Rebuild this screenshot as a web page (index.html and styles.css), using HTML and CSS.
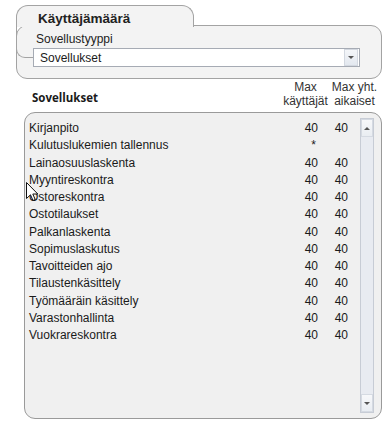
FILE: index.html
```html
<!DOCTYPE html>
<html lang="fi">

<head>
    <meta charset="UTF-8">
    <title>Käyttäjämäärä</title>
    <link rel="stylesheet" href="styles.css">
</head>

<body>
    <!-- yläosan ryhmä -->
    <div class="group">
        <div class="tab"></div>
        <div class="curve"></div>
        <div class="group-body">
            <div class="title">Käyttäjämäärä</div>
            <div class="label">Sovellustyyppi</div>
            <div class="select">
                <span>Sovellukset</span>
                <i class="drop"></i>
            </div>
        </div>
    </div>

    <!-- otsikot -->
    <div class="head">
        <div class="head-name">Sovellukset</div>
        <div class="head-col">Max<br>käyttäjät</div>
        <div class="head-col">Max yht.<br>aikaiset</div>
    </div>

    <!-- lista -->
    <div class="list">
        <div class="rows">
            <div class="row"><span>Kirjanpito</span><span class="num">40</span><span class="num">40</span></div>
            <div class="row"><span>Kulutuslukemien tallennus</span><span class="num star">*</span><span class="num"></span></div>
            <div class="row"><span>Lainaosuuslaskenta</span><span class="num">40</span><span class="num">40</span></div>
            <div class="row"><span>Myyntireskontra</span><span class="num">40</span><span class="num">40</span></div>
            <div class="row"><span>Ostoreskontra</span><span class="num">40</span><span class="num">40</span></div>
            <div class="row"><span>Ostotilaukset</span><span class="num">40</span><span class="num">40</span></div>
            <div class="row"><span>Palkanlaskenta</span><span class="num">40</span><span class="num">40</span></div>
            <div class="row"><span>Sopimuslaskutus</span><span class="num">40</span><span class="num">40</span></div>
            <div class="row"><span>Tavoitteiden ajo</span><span class="num">40</span><span class="num">40</span></div>
            <div class="row"><span>Tilaustenkäsittely</span><span class="num">40</span><span class="num">40</span></div>
            <div class="row"><span>Työmääräin käsittely</span><span class="num">40</span><span class="num">40</span></div>
            <div class="row"><span>Varastonhallinta</span><span class="num">40</span><span class="num">40</span></div>
            <div class="row"><span>Vuokrareskontra</span><span class="num">40</span><span class="num">40</span></div>
        </div>
        <div class="scrollbar">
            <div class="sb-btn"><i class="up"></i></div>
            <div class="sb-track"></div>
            <div class="sb-btn"><i class="down"></i></div>
        </div>
    </div>

    <!-- hiiren osoitin -->
    <svg class="cursor" width="13" height="20" viewBox="0 0 13 20">
        <path d="M0.5 0.5 L0.5 16.5 L4.5 12.8 L7 18.5 L9.2 17.5 L6.8 12 L11.8 12 Z" fill="#fff" stroke="#111" stroke-width="1" stroke-linejoin="miter" />
    </svg>
</body>

</html>
```

FILE: styles.css
```css
html,
body {
    margin: 0;
    padding: 0;
}

body {
    position: relative;
    width: 391px;
    height: 429px;
    background: #fff;
    font-family: "Liberation Sans", Arial, sans-serif;
    font-size: 12px;
    color: #1a1a1a;
    overflow: hidden;
}

.group {
    position: relative;
    box-sizing: border-box;
    width: 366px;
    height: 54px;
    margin: 25px 0 0 16px;
    border: 1px solid #a3a3a3;
    border-radius: 11px;
    background: #f3f3f3;
}

/* välilehti ryhmän päällä */
.tab {
    position: absolute;
    left: -1px;
    top: -21px;
    box-sizing: border-box;
    width: 178px;
    height: 22px;
    border: 1px solid #a3a3a3;
    border-bottom: none;
    border-radius: 12px 12px 0 0;
    background: #f3f3f3;
}

.curve {
    position: absolute;
    left: -1px;
    top: 0;
    width: 17px;
    height: 31px;
    border-left: 1px solid #a3a3a3;
    border-bottom: 1px solid #a3a3a3;
    border-bottom-left-radius: 9px;
}

.group-body {
    position: relative;
    margin-top: -15px;
    padding-left: 16px;
}

.title {
    padding-left: 5px;
    font-size: 13.5px;
    font-weight: bold;
    line-height: 16px;
    color: #222;
}

.label {
    margin-top: 5px;
    padding-left: 3px;
    line-height: 14px;
    color: #222;
}

.select {
    display: flex;
    align-items: center;
    justify-content: space-between;
    box-sizing: border-box;
    width: 327px;
    height: 19px;
    margin-top: 2px;
    padding-left: 6px;
    padding-right: 1px;
    border: 1px solid #a6abb4;
    background: #fff;
    color: #1a1a1a;
}

.drop {
    display: flex;
    align-items: center;
    justify-content: center;
    width: 12px;
    height: 15px;
    border: 1px solid #d3d8e0;
    background: linear-gradient(#f4f6f9, #e3e8ef);
}

.drop::after {
    content: "";
    border-left: 3px solid transparent;
    border-right: 3px solid transparent;
    border-top: 3px solid #555;
}

.head {
    display: flex;
    align-items: flex-end;
    height: 27px;
    margin: 2px 0 0 0;
    color: #333;
    line-height: 13.5px;
}

.head-name {
    flex: 1;
    padding-left: 32px;
    padding-bottom: 4px;
    font-weight: bold;
    color: #1a1a1a;
    font-family: "Open Sans", "Liberation Sans", sans-serif;
    font-size: 11.5px;
}

.head-col {
    width: 49px;
    text-align: center;
}

.head-col + .head-col {
    margin-right: 12px;
}

.list {
    display: flex;
    box-sizing: border-box;
    width: 358px;
    height: 307px;
    margin: 4px 0 0 24px;
    border: 1px solid #9a9a9a;
    border-radius: 11px;
    background: #f0f0f0;
}

.rows {
    flex: 1;
    padding: 7px 12px 0 4px;
}

.row {
    display: grid;
    grid-template-columns: 1fr 40px 30px;
    height: 17.25px;
    line-height: 17.25px;
}

.num {
    text-align: right;
}

.star {
    padding-right: 2px;
}

.scrollbar {
    display: flex;
    flex-direction: column;
    box-sizing: border-box;
    width: 14px;
    margin: 5px 7px 5px 0;
    border: 1px solid #c7ccd5;
    background: #e8ebf1;
}

.sb-btn {
    display: flex;
    align-items: center;
    justify-content: center;
    height: 16px;
    border: 1px solid #d5dae2;
    background: linear-gradient(#f7f8fa, #e9edf2);
}

.sb-track {
    flex: 1;
}

.up {
    border-left: 3px solid transparent;
    border-right: 3px solid transparent;
    border-bottom: 3px solid #555;
}

.down {
    border-left: 3px solid transparent;
    border-right: 3px solid transparent;
    border-top: 3px solid #555;
}

.cursor {
    position: absolute;
    left: 26px;
    top: 182px;
}
```
